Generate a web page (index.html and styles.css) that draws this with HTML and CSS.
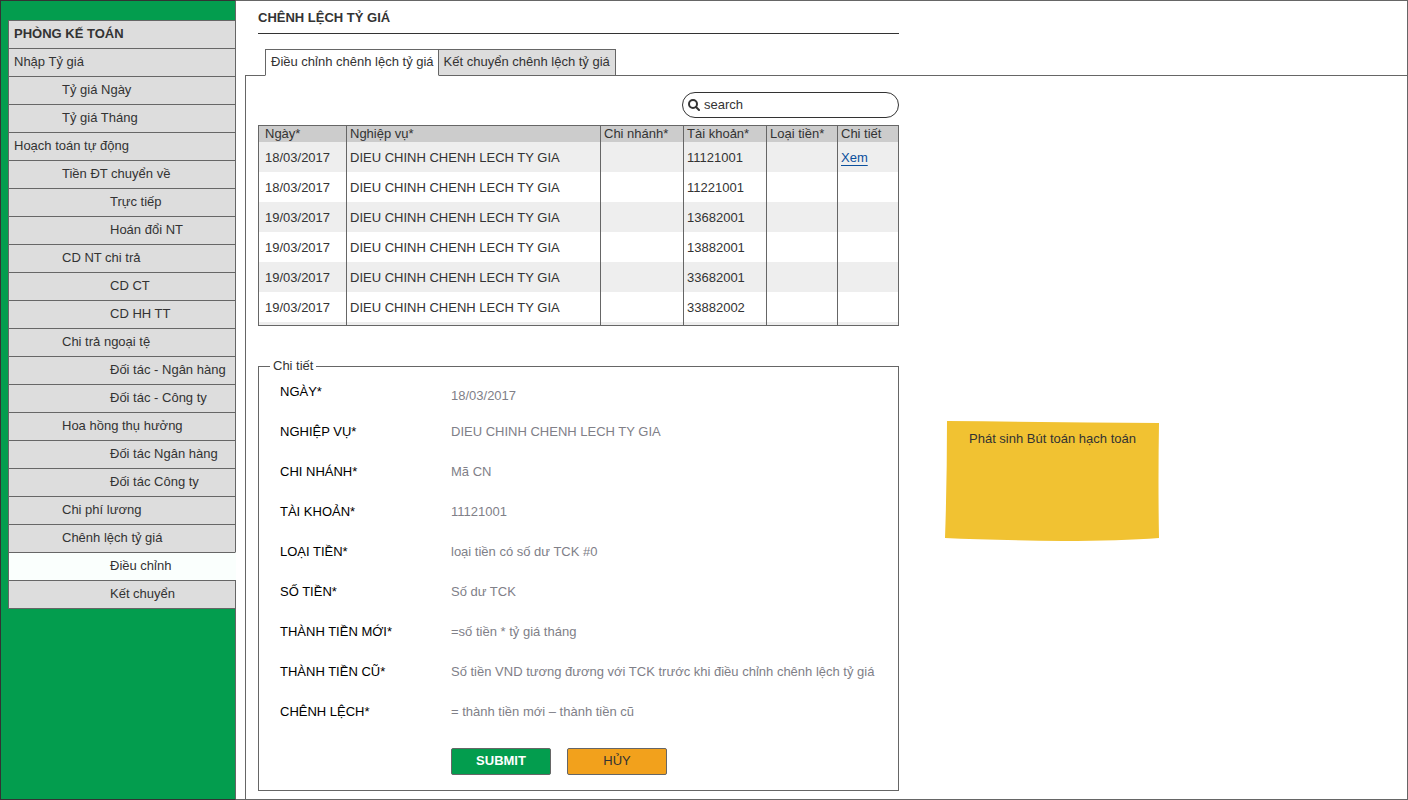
FILE: index.html
```html
<!DOCTYPE html>
<html lang="vi">
<head>
<meta charset="utf-8">
<title>Chênh lệch tỷ giá</title>
<link rel="stylesheet" href="styles.css">
</head>
<body>
<div class="app">
  <nav class="sidebar" aria-label="Phòng kế toán">
    <ul class="menu">
      <li><a class="item title" href="#">PHÒNG KẾ TOÁN</a></li>
      <li><a class="item" href="#">Nhập Tỷ giá</a></li>
      <li><a class="item level-2" href="#">Tỷ giá Ngày</a></li>
      <li><a class="item level-2" href="#">Tỷ giá Tháng</a></li>
      <li><a class="item" href="#">Hoạch toán tự động</a></li>
      <li><a class="item level-2" href="#">Tiền ĐT chuyển về</a></li>
      <li><a class="item level-3" href="#">Trực tiếp</a></li>
      <li><a class="item level-3" href="#">Hoán đổi NT</a></li>
      <li><a class="item level-2" href="#">CD NT chi trả</a></li>
      <li><a class="item level-3" href="#">CD CT</a></li>
      <li><a class="item level-3" href="#">CD HH TT</a></li>
      <li><a class="item level-2" href="#">Chi trả ngoại tệ</a></li>
      <li><a class="item level-3" href="#">Đối tác - Ngân hàng</a></li>
      <li><a class="item level-3" href="#">Đối tác - Công ty</a></li>
      <li><a class="item level-2" href="#">Hoa hồng thụ hưởng</a></li>
      <li><a class="item level-3" href="#">Đối tác Ngân hàng</a></li>
      <li><a class="item level-3" href="#">Đối tác Công ty</a></li>
      <li><a class="item level-2" href="#">Chi phí lương</a></li>
      <li><a class="item level-2" href="#">Chênh lệch tỷ giá</a></li>
      <li><a class="item level-3 selected" href="#" aria-current="page">Điều chỉnh</a></li>
      <li><a class="item level-3" href="#">Kết chuyển</a></li>
    </ul>
  </nav>
  <main class="main">
    <h1 class="heading">CHÊNH LỆCH TỶ GIÁ</h1>
    <div class="tabs" role="tablist">
      <button class="tab active" type="button" role="tab" aria-selected="true">Điều chỉnh chênh lệch tỷ giá</button>
      <button class="tab" type="button" role="tab" aria-selected="false">Kết chuyển chênh lệch tỷ giá</button>
    </div>
    <div class="panel" role="tabpanel">
      <div class="content">
        <label class="search">
          <svg class="search-icon" viewBox="0 0 12 12" aria-hidden="true"><circle cx="5" cy="5" r="4"/><path d="M8 8l3 3"/></svg>
          <input class="search-input" type="search" placeholder="search" aria-label="search">
        </label>
        <table class="grid">
          <colgroup><col class="c-date"><col><col class="c-code"><col class="c-code"><col class="c-type"><col class="c-detail"></colgroup>
          <thead><tr><th>Ngày*</th><th>Nghiệp vụ*</th><th>Chi nhánh*</th><th>Tài khoản*</th><th>Loại tiền*</th><th>Chi tiết</th></tr></thead>
          <tbody>
            <tr><td>18/03/2017</td><td>DIEU CHINH CHENH LECH TY GIA</td><td></td><td>11121001</td><td></td><td><a class="link" href="#">Xem</a></td></tr>
            <tr><td>18/03/2017</td><td>DIEU CHINH CHENH LECH TY GIA</td><td></td><td>11221001</td><td></td><td></td></tr>
            <tr><td>19/03/2017</td><td>DIEU CHINH CHENH LECH TY GIA</td><td></td><td>13682001</td><td></td><td></td></tr>
            <tr><td>19/03/2017</td><td>DIEU CHINH CHENH LECH TY GIA</td><td></td><td>13882001</td><td></td><td></td></tr>
            <tr><td>19/03/2017</td><td>DIEU CHINH CHENH LECH TY GIA</td><td></td><td>33682001</td><td></td><td></td></tr>
            <tr><td>19/03/2017</td><td>DIEU CHINH CHENH LECH TY GIA</td><td></td><td>33882002</td><td></td><td></td></tr>
          </tbody>
          <tfoot><tr><td></td><td></td><td></td><td></td><td></td><td></td></tr></tfoot>
        </table>
        <form>
          <fieldset class="detail">
            <legend>Chi tiết</legend>
            <dl class="fields">
              <dt>NGÀY*</dt><dd class="date">18/03/2017</dd>
              <dt>NGHIỆP VỤ*</dt><dd>DIEU CHINH CHENH LECH TY GIA</dd>
              <dt>CHI NHÁNH*</dt><dd>Mã CN</dd>
              <dt>TÀI KHOẢN*</dt><dd>11121001</dd>
              <dt>LOẠI TIỀN*</dt><dd>loại tiền có số dư TCK #0</dd>
              <dt>SỐ TIỀN*</dt><dd>Số dư TCK</dd>
              <dt>THÀNH TIỀN MỚI*</dt><dd>=số tiền * tỷ giá tháng</dd>
              <dt>THÀNH TIỀN CŨ*</dt><dd>Số tiền VND tương đương với TCK trước khi điều chỉnh chênh lệch tỷ giá</dd>
              <dt>CHÊNH LỆCH*</dt><dd>= thành tiền mới – thành tiền cũ</dd>
            </dl>
            <div class="actions">
              <button class="button submit" type="button">SUBMIT</button>
              <button class="button cancel" type="button">HỦY</button>
            </div>
          </fieldset>
        </form>
      </div>
      <aside class="note">
        <svg class="note-paper" viewBox="0 0 215 120" preserveAspectRatio="none" aria-hidden="true"><path d="M2 0Q110 1 214 2Q213 60 214 117Q175 120 118 120Q45 119 0 117Q2 60 2 0Z"/></svg>
        <p class="note-text">Phát sinh Bút toán hạch toán</p>
      </aside>
    </div>
  </main>
</div>
</body>
</html>
```
FILE: styles.css
```css
* { box-sizing: border-box; }

body {
  margin: 0;
  background: #fff;
  color: #333;
  font: 13px/16px "Liberation Sans", Arial, sans-serif;
}

button, input { font: inherit; color: inherit; }

.app {
  display: flex;
  min-height: 100vh;
}

/* Sidebar */
.sidebar {
  flex: 0 0 236px;
  padding: 19px 0 0 7px;
  border: 1px solid #333;
  border-right-color: #666;
  background: #039d4e;
}

.menu {
  margin: 0 -1px 0 0;
  padding: 0;
  list-style: none;
  border-bottom: 1px solid #666;
}

.item {
  display: block;
  height: 28px;
  padding: 5px 0 6px 5px;
  border: solid #666;
  border-width: 1px 1px 0;
  background: #ddd;
  color: #333;
  text-decoration: none;
  white-space: nowrap;
}

.title { font-weight: bold; }
.level-2 { padding-left: 53px; }
.level-3 { padding-left: 101px; }

.selected {
  background: #fafffd;
  border-right-color: #fafffd;
}

/* Main area */
.main {
  display: flex;
  flex: 1;
  flex-direction: column;
  min-width: 0;
  padding-left: 9px;
  border: solid #666;
  border-width: 1px 1px 1px 0;
}

.heading {
  max-width: 641px;
  margin: 0 13px;
  padding: 9px 0 7px;
  border-bottom: 1px solid #333;
  font-size: 13px;
  line-height: 16px;
}

.tabs {
  display: flex;
  margin: 15px 0 -1px 20px;
}

.tab {
  position: relative;
  height: 27px;
  padding: 0 5px 2px;
  border: 1px solid #666;
  background: #ddd;
  white-space: nowrap;
}

.tab + .tab { border-left: 0; }

.tab.active {
  padding-right: 4px;
  border-bottom-color: #fff;
  background: #fff;
}

.panel {
  display: flex;
  flex: 1;
  gap: 46px;
  align-items: flex-start;
  padding: 16px 12px 8px;
  border: solid #666;
  border-width: 1px 0 0 1px;
}

.content {
  flex: 0 1 641px;
  min-width: 0;
}

.search {
  display: flex;
  gap: 4px;
  align-items: center;
  width: 217px;
  height: 26px;
  margin: 0 0 7px auto;
  padding: 0 12px 0 5px;
  border: 1px solid #333;
  border-radius: 13px;
}

.search-icon {
  flex: none;
  width: 12px;
  height: 12px;
  fill: none;
  stroke: #333;
  stroke-width: 2;
  stroke-linecap: round;
}

.search-input {
  flex: 1;
  min-width: 0;
  padding: 0;
  border: 0;
  outline: 0;
  background: none;
}

.search-input::placeholder { color: #333; opacity: 1; }

/* Records */
.grid {
  width: 100%;
  table-layout: fixed;
  border: 1px solid #666;
  border-spacing: 0;
}

.c-date { width: 87px; }
.c-code { width: 83px; }
.c-type { width: 71px; }
.c-detail { width: 61px; }

.grid th, .grid td {
  padding: 0 0 0 3px;
  border-left: 1px solid #666;
  text-align: left;
  font-weight: normal;
  white-space: nowrap;
}

.grid th { height: 16px; background: #ccc; }
.grid td { height: 30px; padding-top: 2px; }
.grid tfoot td { height: 3px; background: #eee; }
.grid tbody tr:nth-child(odd) td { background: #eee; }

.grid th:first-child, .grid td:first-child {
  padding-left: 6px;
  border-left: 0;
}

.link {
  color: #0a4f9c;
  text-underline-offset: 3px;
}

/* Detail form */
.detail {
  min-width: 0;
  margin: 32px 0 0;
  padding: 6px 0 15px 11px;
  border: 1px solid #666;
}

.detail legend { padding: 0 3px; }

.fields {
  display: grid;
  grid-template-columns: 171px 1fr;
  grid-auto-rows: 24px;
  row-gap: 16px;
  align-items: center;
  margin: 0;
  padding-left: 10px;
  white-space: nowrap;
}

.fields dt { color: #000; }
.fields dd { margin: 0; color: #808088; }
.fields .date { align-self: end; }

.actions {
  display: flex;
  gap: 16px;
  margin-top: 24px;
  padding-left: 181px;
}

.button {
  width: 100px;
  height: 27px;
  padding: 0 0 2px;
  border: 1px solid #666;
  border-radius: 2px;
}

.submit { background: #039d4e; color: #fff; font-weight: bold; }
.cancel { background: #f2a11c; }

/* Sticky note */
.note {
  display: grid;
  flex: 0 0 215px;
  height: 120px;
  margin-top: 329px;
}

.note-paper, .note-text { grid-area: 1 / 1; }
.note-paper { width: 100%; height: 100%; fill: #f1c232; }
.note-text { margin: 10px 0 0; text-align: center; }
```
